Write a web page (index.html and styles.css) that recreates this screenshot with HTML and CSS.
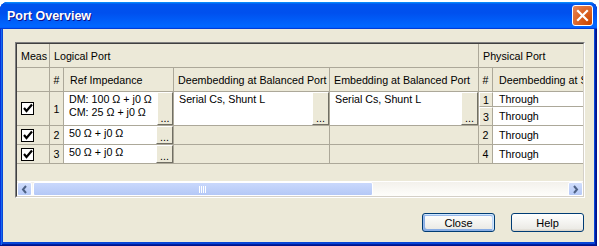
FILE: index.html
```html
<!DOCTYPE html>
<html lang="en">
<head>
    <meta charset="UTF-8">
    <title>Port Overview</title>
    <link rel="stylesheet" href="styles.css">
</head>
<body>
    <div class="window">
        <div class="titlebar">
            <span class="title">Port Overview</span>
            <span class="close-x">
                <svg width="13" height="13" viewBox="0 0 13 13"><path d="M2 2 L11 11 M11 2 L2 11" stroke="#fff" stroke-width="2.2" stroke-linecap="square"/></svg>
            </span>
        </div>

        <div class="client">
            <div class="grid">
                <div class="grid-inner">
                    <div class="table-wrap">
                        <div class="table">
                            <div class="hd">Meas</div>
                            <div class="hd span4">Logical Port</div>
                            <div class="hd span2">Physical Port</div>

                            <div class="hd"></div>
                            <div class="hd center">#</div>
                            <div class="hd wide">Ref Impedance</div>
                            <div class="hd">Deembedding at Balanced Port</div>
                            <div class="hd">Embedding at Balanced Port</div>
                            <div class="hd center">#</div>
                            <div class="hd wide">Deembedding at S</div>

                            <div class="check rows2"><svg width="13" height="13" viewBox="0 0 13 13"><rect x="0.5" y="0.5" width="12" height="12" fill="#fff" stroke="#000"/><path d="M3 6 L5.5 9 L11 2.5" fill="none" stroke="#000" stroke-width="2.2"/></svg></div>
                            <div class="num rows2">1</div>
                            <div class="edit rows2"><div class="val">DM: 100 Ω + j0 Ω<br>CM: 25 Ω + j0 Ω</div><div class="dots">...</div></div>
                            <div class="edit rows2"><div class="val">Serial Cs, Shunt L</div><div class="dots">...</div></div>
                            <div class="edit rows2"><div class="val">Serial Cs, Shunt L</div><div class="dots">...</div></div>
                            <div class="num raised">1</div>
                            <div class="through">Through</div>
                            <div class="num raised">3</div>
                            <div class="through">Through</div>

                            <div class="check"><svg width="13" height="13" viewBox="0 0 13 13"><rect x="0.5" y="0.5" width="12" height="12" fill="#fff" stroke="#000"/><path d="M3 6 L5.5 9 L11 2.5" fill="none" stroke="#000" stroke-width="2.2"/></svg></div>
                            <div class="num">2</div>
                            <div class="edit"><div class="val">50 Ω + j0 Ω</div><div class="dots">...</div></div>
                            <div class="blank"></div>
                            <div class="blank"></div>
                            <div class="num">2</div>
                            <div class="through">Through</div>

                            <div class="check"><svg width="13" height="13" viewBox="0 0 13 13"><rect x="0.5" y="0.5" width="12" height="12" fill="#fff" stroke="#000"/><path d="M3 6 L5.5 9 L11 2.5" fill="none" stroke="#000" stroke-width="2.2"/></svg></div>
                            <div class="num">3</div>
                            <div class="edit"><div class="val">50 Ω + j0 Ω</div><div class="dots">...</div></div>
                            <div class="blank"></div>
                            <div class="blank"></div>
                            <div class="num">4</div>
                            <div class="through">Through</div>
                        </div>
                    </div>

                    <div class="scrollbar">
                        <div class="arrow">
                            <svg width="7" height="9" viewBox="0 0 7 9"><path d="M5 1 L2 4.5 L5 8" fill="none" stroke="#4D6185" stroke-width="2"/></svg>
                        </div>
                        <div class="thumb">
                            <svg width="8" height="7" viewBox="0 0 8 7"><path d="M0.5 0 V7 M2.5 0 V7 M4.5 0 V7 M6.5 0 V7" stroke="#fff" stroke-width="1"/></svg>
                        </div>
                        <div class="track"></div>
                        <div class="arrow">
                            <svg width="7" height="9" viewBox="0 0 7 9"><path d="M2 1 L5 4.5 L2 8" fill="none" stroke="#4D6185" stroke-width="2"/></svg>
                        </div>
                    </div>
                </div>
            </div>

            <div class="buttons">
                <button class="btn default">Close</button>
                <button class="btn">Help</button>
            </div>
        </div>
    </div>
</body>
</html>
```

FILE: styles.css
```css
body {
    margin: 0;
    width: 599px;
    height: 246px;
    overflow: hidden;
    background: #fff;
    font-family: "Liberation Sans", Arial, sans-serif;
    font-size: 10.7px;
    color: #000;
}

.window {
    margin-top: 2px;
    width: 597px;
    height: 244px;
    box-sizing: border-box;
    padding: 0 3px 4px 3px;
    display: flex;
    flex-direction: column;
    background: #0846D8;
    border-radius: 8px 8px 0 0;
    box-shadow: inset -1px -1px #00138C, inset 1px 0 #0831D9, inset 2px 0 #166AEE, inset -2px -2px #001EA0;
}

.titlebar {
    height: 27px;
    margin: 0 -3px;
    padding: 0 4px 0 7px;
    display: flex;
    align-items: center;
    justify-content: space-between;
    border-radius: 8px 8px 0 0;
    background: linear-gradient(to bottom, #0997FF 0, #0053EE 8%, #0050EE 40%, #0066FF 88%, #0066FF 93%, #005BFF 95%, #003DD7 96%, #003DD7 100%);
}

.title {
    color: #fff;
    font-weight: bold;
    font-size: 12.5px;
    text-shadow: 1px 1px #0F1089;
    padding-top: 1px;
}

.close-x {
    width: 19px;
    height: 19px;
    display: flex;
    align-items: center;
    justify-content: center;
    border: 1px solid #fff;
    border-radius: 3px;
    background: radial-gradient(circle at 90% 90%, #CC4600 0, #DC6527 55%, #E8885C 100%);
}

.client {
    flex: 1;
    background: #ECE9D8;
    padding: 13px 10px 0 12px;
    display: flex;
    flex-direction: column;
}

.grid {
    width: 570px;
    height: 156px;
    box-sizing: border-box;
    border: 1px solid;
    border-color: #808080 #fff #fff #808080;
}

.grid-inner {
    height: 100%;
    box-sizing: border-box;
    border: 1px solid;
    border-color: #404040 #D4D0C8 #D4D0C8 #404040;
    display: flex;
    flex-direction: column;
}

.table-wrap {
    flex: 1;
    overflow: hidden;
}

.table {
    display: grid;
    grid-template-columns: 33px 14px 110px 156px 149px 14px 130px;
    grid-template-rows: 24px 24px 15px 19px 19px 19px;
    width: 606px;
}

.table > div {
    box-sizing: border-box;
    border-right: 1px solid #ACA899;
    border-bottom: 1px solid #ACA899;
    overflow: hidden;
    white-space: nowrap;
}

.span4 {
    grid-column: span 4;
}

.span2 {
    grid-column: span 2;
}

.rows2 {
    grid-row: span 2;
}

.hd {
    display: flex;
    align-items: center;
    padding-left: 4px;
}

.hd.wide {
    padding-left: 6px;
}

.hd.center {
    justify-content: center;
    padding-left: 0;
}

.num {
    display: flex;
    align-items: center;
    justify-content: center;
}

.table > .raised {
    border-left: 1px solid #fff;
    border-top: 1px solid #fff;
}

.check {
    display: flex;
    align-items: center;
    padding-left: 4px;
}

.edit {
    display: flex;
    background: #fff;
}

.val {
    flex: 1;
    padding: 1px 5px;
    line-height: 13px;
}

.dots {
    width: 17px;
    box-sizing: border-box;
    display: flex;
    align-items: flex-end;
    justify-content: center;
    line-height: 12px;
    background: #ECE9D8;
    border: 1px solid;
    border-color: #fff #716F64 #716F64 #fff;
}

.through {
    display: flex;
    align-items: center;
    padding-left: 6px;
    background: #fff;
}

.scrollbar {
    height: 14px;
    display: flex;
    background: linear-gradient(to bottom, #F3F1EC, #FEFEFB);
    border-top: 1px solid #fff;
}

.arrow {
    width: 15px;
    box-sizing: border-box;
    display: flex;
    align-items: center;
    justify-content: center;
    background: linear-gradient(to bottom, #D0DDFC, #B5C9F7);
    border: 1px solid #fff;
    border-radius: 2px;
}

.thumb {
    width: 340px;
    margin-left: 1px;
    box-sizing: border-box;
    display: flex;
    align-items: center;
    justify-content: center;
    background: linear-gradient(to bottom, #C9D8FC, #B4C8F6);
    border: 1px solid #fff;
    border-radius: 2px;
}

.track {
    flex: 1;
}

.buttons {
    display: flex;
    justify-content: flex-end;
    gap: 16px;
    margin-top: 15px;
}

.btn {
    width: 73px;
    height: 19px;
    padding: 0;
    font-family: "Liberation Sans", Arial, sans-serif;
    font-size: 11px;
    color: #000;
    border: 1px solid #003C74;
    border-radius: 3px;
    background: linear-gradient(to bottom, #FFFFFF, #ECEBE6 86%, #D6D0C5);
}

.btn.default {
    box-shadow: inset -1px 1px #CEE7FF, inset 1px 2px #98B8EA, inset -2px 2px #BCD4F6, inset 1px -1px #89ADE4, inset 2px -2px #89ADE4;
}
```
